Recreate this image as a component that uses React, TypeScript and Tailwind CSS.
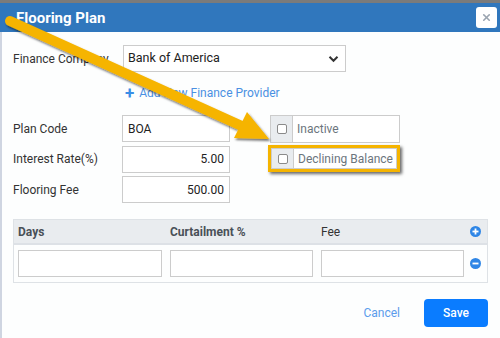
import { X } from "lucide-react";

const labelCls = "w-[109px] shrink-0 text-[12px] text-[#333]";
const inputCls =
  "h-[27px] border border-[#ccc] bg-white px-[5px] flex items-center text-[12px] text-[#222]";

const Checkbox = () => (
  <div className="w-[10px] h-[10px] rounded-[2px] border border-[#8a8a8a] bg-white" />
);

const CheckGroup = ({ label, width }: { label: string; width: string }) => (
  <div className={`flex border border-[#ccc] bg-white ${width}`}>
    <div className="w-[22px] shrink-0 bg-[#e9ecef] border-r border-[#ccc] flex items-center justify-center">
      <Checkbox />
    </div>
    <div className="flex items-center pl-[4px] text-[12px] text-[#6c757d]">{label}</div>
  </div>
);

const Arrow = () => (
  <svg
    className="absolute left-0 top-0 pointer-events-none"
    width="500"
    height="338"
    viewBox="0 0 500 338"
  >
    <defs>
      <filter id="sh" x="-10%" y="-10%" width="130%" height="140%">
        <feDropShadow dx="1.5" dy="2" stdDeviation="1.2" floodColor="#000" floodOpacity="0.55" />
      </filter>
    </defs>
    <g filter="url(#sh)">
      <line x1="10" y1="21" x2="244" y2="127" stroke="#f6b400" strokeWidth="10" strokeLinecap="round" />
      <polygon points="269,139 234,138 247,112" fill="#f6b400" />
    </g>
  </svg>
);

export default function App() {
  return (
    <div
      className="relative w-[500px] h-[338px] overflow-hidden bg-white"
      style={{ fontFamily: "Roboto, 'Liberation Sans', sans-serif" }}
    >
      <div className="h-[3px] bg-[#7b7b7b]" />
      {/* Header */}
      <div className="h-[29px] bg-[#3077bd] flex items-center justify-between pl-[16px] pr-[3px]">
        <span className="text-[15px] font-bold text-white mt-[1px]">Flooring Plan</span>
        <button className="w-[21px] h-[21px] rounded-[3px] bg-white flex items-center justify-center">
          <X className="w-[11px] h-[11px] text-[#9aa4b0]" strokeWidth={3.5} />
        </button>
      </div>

      <div className="flex h-[306px]">
        <div className="w-[2px] bg-[#cfd5e1]" />
        <div className="flex-1 bg-[#fdfefe] pl-[11px] pr-[12px] pt-[13px]">
          {/* Finance company */}
          <div className="flex items-center">
            <div className={labelCls}>Finance Company</div>
            <div className="ml-[1px] w-[223px] h-[27px] border border-[#ccc] bg-white flex items-center justify-between pl-[4px] pr-[6px] text-[12.5px] text-[#222]">
              <span>Bank of America</span>
              <svg width="11" height="8" viewBox="0 0 11 8">
                <path d="M1.5 1.8 L5.5 5.8 L9.5 1.8" stroke="#333" strokeWidth="2" fill="none" />
              </svg>
            </div>
          </div>

          <div className="mt-[14px] ml-[112px] h-[14px] flex items-center text-[12px] text-[#4a90e2]">
            <span className="text-[17px] font-bold leading-none text-[#3a8ee6] mr-[5px]">+</span>
            <span>Add New Finance Provider</span>
          </div>

          {/* Plan fields + checkboxes */}
          <div className="mt-[15px] flex">
            <div className="flex flex-col gap-[3.5px]">
              <div className="flex items-center">
                <div className={labelCls}>Plan Code</div>
                <div className={`${inputCls} w-[108px]`}>BOA</div>
              </div>
              <div className="flex items-center">
                <div className={labelCls}>Interest Rate(%)</div>
                <div className={`${inputCls} w-[108px] justify-end`}>5.00</div>
              </div>
              <div className="flex items-center">
                <div className={labelCls}>Flooring Fee</div>
                <div className={`${inputCls} w-[108px] justify-end`}>500.00</div>
              </div>
            </div>
            <div className="ml-[40px] flex flex-col">
              <div className="h-[28px] flex">
                <CheckGroup label="Inactive" width="w-[130px]" />
              </div>
              <div className="mt-[2px] -ml-[2px] w-[132px] h-[27px] border-[3px] border-[#f5b400] shadow-[2px_2px_3px_rgba(0,0,0,0.6)] flex">
                <CheckGroup label="Declining Balance" width="w-[126px]" />
              </div>
            </div>
          </div>

          {/* Table */}
          <div className="mt-[16px] border border-[#dee2e6]">
            <div className="h-[25px] bg-[#e9ecef] border-b-2 border-[#dde1e6] flex items-center pl-[4px] text-[12px]">
              <div className="w-[152px] font-bold text-[#495057]">Days</div>
              <div className="w-[151px] font-bold text-[#495057]">Curtailment %</div>
              <div className="w-[143px] text-[#333]">Fee</div>
              <div className="flex-1 flex justify-center">
                <PlusMinus plus />
              </div>
            </div>
            <div className="flex items-center pl-[4px] py-[5px]">
              <div className="w-[144px] h-[27px] border border-[#ccc] bg-white" />
              <div className="ml-[8px] w-[143px] h-[27px] border border-[#ccc] bg-white" />
              <div className="ml-[8px] w-[143px] h-[27px] border border-[#ccc] bg-white" />
              <div className="flex-1 flex justify-center">
                <PlusMinus />
              </div>
            </div>
          </div>

          {/* Footer */}
          <div className="mt-[16px] flex items-center justify-end">
            <span className="text-[12px] text-[#5b9cec] mr-[24px]">Cancel</span>
            <button className="w-[64px] h-[28px] rounded-[4px] bg-[#0a7cff] text-white text-[12px] font-medium">
              Save
            </button>
          </div>
        </div>
      </div>

      <Arrow />
    </div>
  );
}

function PlusMinus({ plus }: { plus?: boolean }) {
  return (
    <svg width="11" height="11" viewBox="0 0 11 11">
      <circle cx="5.5" cy="5.5" r="5.5" fill="#2f86e6" />
      <rect x="2.5" y="4.6" width="6" height="1.8" fill="#fff" />
      {plus && <rect x="4.6" y="2.5" width="1.8" height="6" fill="#fff" />}
    </svg>
  );
}
